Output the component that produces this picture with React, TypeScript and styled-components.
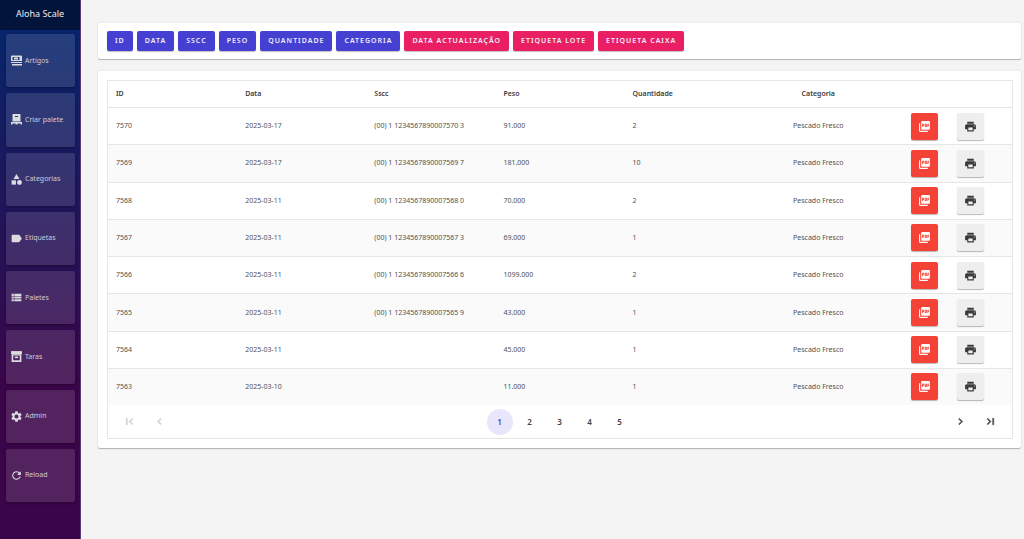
import React from "react";
import styled, { createGlobalStyle } from "styled-components";
import {
  MdCategory,
  MdChevronLeft,
  MdChevronRight,
  MdFirstPage,
  MdLabel,
  MdLastPage,
  MdPictureAsPdf,
  MdPrint,
  MdRefresh,
  MdSettings,
  MdViewList,
} from "react-icons/md";

const GlobalStyle = createGlobalStyle`
  * { box-sizing: border-box; }
  body {
    margin: 0;
    background: #f4f4f4;
    font-family: "Noto Sans", "Open Sans", sans-serif;
    color: #3c3c3c;
  }
  button { font-family: inherit; cursor: pointer; }
`;

const Layout = styled.div`
  display: flex;
  min-height: 100vh;
`;

const Sidebar = styled.aside`
  flex: 0 0 81px;
  background: linear-gradient(180deg, #08246a 0%, #08246a 8%, #3b0549 72%, #3b0549 100%);
  border-right: 1px solid #5a3a7c;
`;

const Brand = styled.div`
  height: 30px;
  display: flex;
  align-items: center;
  justify-content: center;
  background: #03143a;
  color: #ececf2;
  font-size: 9px;
  line-height: 12px;
  padding-bottom: 2px;
`;

const NavList = styled.nav`
  display: grid;
  grid-auto-rows: 1fr;
  gap: 6px;
  min-height: 468px;
  margin: 4px 5px 0 6px;
`;

const NavLink = styled.a`
  display: flex;
  align-items: center;
  gap: 2px;
  padding-left: 4px;
  border-radius: 2px;
  background: rgba(255, 255, 255, 0.12);
  box-shadow: 0 1px 3px rgba(0, 0, 0, 0.35);
  color: #cfcbdb;
  font-size: 7px;
  line-height: 10px;
  text-decoration: none;
  white-space: nowrap;

  svg {
    flex: none;
    width: 13px;
    height: 13px;
    color: #dcdce0;
  }
`;

const Main = styled.main`
  flex: 1;
  min-width: 0;
  display: flex;
  flex-direction: column;
  gap: 12px;
  padding: 23px 3px 23px 17px;
`;

const Card = styled.section`
  padding: 9px 8px 9px 9px;
  background: #fff;
  border-radius: 2px;
  box-shadow: 0 1px 1px rgba(0, 0, 0, 0.26), 0 0 2px rgba(0, 0, 0, 0.1);
`;

const Toolbar = styled(Card)`
  display: flex;
  flex-wrap: wrap;
  gap: 4px;
  padding-top: 8px;
  padding-bottom: 8px;
`;

const ColumnButton = styled.button<{ $off?: boolean }>`
  height: 20px;
  padding: 0 8px;
  border: 0;
  border-radius: 2px;
  background: ${(p) => (p.$off ? "#e91e63" : "#4540d2")};
  box-shadow: 0 1px 1px rgba(0, 0, 0, 0.25);
  color: #f0eefb;
  font-size: 7px;
  font-weight: 600;
  line-height: 20px;
  letter-spacing: 1px;
  text-transform: uppercase;
`;

const Frame = styled.div`
  border: 1px solid #e6e6e6;
`;

const Table = styled.table`
  width: 100%;
  height: 324px;
  table-layout: fixed;
  border-collapse: separate;
  border-spacing: 0;
  font-size: 7px;
  line-height: 10px;
`;

const HeadCell = styled.th<{ $center?: boolean }>`
  height: 27px;
  padding: 0 8px;
  border-bottom: 1px solid #e6e6e6;
  font-weight: 600;
  text-align: ${(p) => (p.$center ? "center" : "left")};
`;

const Row = styled.tr`
  &:nth-child(even) { background: #fafafa; }
  &:not(:last-child) td { border-bottom: 1px solid #e6e6e6; }
`;

const Cell = styled.td<{ $center?: boolean }>`
  padding: 0 8px;
  color: #505050;
  text-align: ${(p) => (p.$center ? "center" : "left")};
`;

const Actions = styled.div`
  display: flex;
  justify-content: center;
  gap: 19px;
`;

const ActionButton = styled.button<{ $danger?: boolean }>`
  width: 27px;
  height: 27px;
  display: flex;
  align-items: center;
  justify-content: center;
  padding: 0;
  border: 0;
  border-radius: 2px;
  background: ${(p) => (p.$danger ? "#f44336" : "#eeeeee")};
  color: ${(p) => (p.$danger ? "#fff" : "#3a3a3a")};
  box-shadow: 0 1px 1px rgba(0, 0, 0, 0.28);

  svg { width: 13px; height: 13px; }
`;

const Pager = styled.nav`
  display: flex;
  align-items: center;
  justify-content: space-between;
  height: 33px;
  padding: 0 9px 0 8px;
`;

const PagerGroup = styled.div`
  display: flex;
  gap: 4px;
`;

const PageButton = styled.button<{ $active?: boolean }>`
  width: 26px;
  height: 26px;
  display: flex;
  align-items: center;
  justify-content: center;
  padding: 0;
  border: 0;
  border-radius: 50%;
  background: ${(p) => (p.$active ? "#e8e6fa" : "transparent")};
  color: ${(p) => (p.$active ? "#4540d2" : "#444")};
  font-size: 8px;
  font-weight: 600;
  line-height: 12px;

  &:disabled { color: #d0d0d0; }
  svg {
    width: 13px;
    height: 13px;
  }
  svg path:not([fill="none"]) {
    stroke: currentColor;
    stroke-width: 1px;
  }
`;

const ArticleIcon = () => (
  <svg viewBox="-2 -2 26 26" fill="currentColor" aria-hidden="true">
    <path fillRule="evenodd" d="M2 1h18a2 2 0 0 1 2 2v9H0V3a2 2 0 0 1 2-2zm1 3v6h14V4z" />
    <path d="M6 5h8v4H6zM0 14h22v2H0zM2 18h20v3H2z" />
  </svg>
);

const PalletIcon = () => (
  <svg viewBox="-2 -2 26 26" fill="currentColor" aria-hidden="true">
    <path fillRule="evenodd" d="M4 0h14a1 1 0 0 1 1 1v14H3V1a1 1 0 0 1 1-1zm4 4v2h6V4z" />
    <path d="M0 16h22v5h-3v-2h-6v2H9v-2H3v2H0z" />
  </svg>
);

const CrateIcon = () => (
  <svg viewBox="0 0 24 24" fill="currentColor" aria-hidden="true">
    <path d="M2 2h20v6H2z" />
    <path fillRule="evenodd" d="M3 8h18v14H3zm3 2v9h12v-9z" />
    <path d="M9 12h6v3H9z" />
  </svg>
);

const navItems = [
  { label: "Artigos", Icon: ArticleIcon },
  { label: "Criar palete", Icon: PalletIcon },
  { label: "Categorias", Icon: MdCategory },
  { label: "Etiquetas", Icon: MdLabel },
  { label: "Paletes", Icon: MdViewList },
  { label: "Taras", Icon: CrateIcon },
  { label: "Admin", Icon: MdSettings },
  { label: "Reload", Icon: MdRefresh },
];

const columnButtons = [
  { label: "ID" },
  { label: "Data" },
  { label: "Sscc" },
  { label: "Peso" },
  { label: "Quantidade" },
  { label: "Categoria" },
  { label: "Data Actualização", off: true },
  { label: "Etiqueta Lote", off: true },
  { label: "Etiqueta Caixa", off: true },
];

const rows = [
  ["7570", "2025-03-17", "(00) 1 1234567890007570 3", "91.000", "2"],
  ["7569", "2025-03-17", "(00) 1 1234567890007569 7", "181.000", "10"],
  ["7568", "2025-03-11", "(00) 1 1234567890007568 0", "70.000", "2"],
  ["7567", "2025-03-11", "(00) 1 1234567890007567 3", "69.000", "1"],
  ["7566", "2025-03-11", "(00) 1 1234567890007566 6", "1099.000", "2"],
  ["7565", "2025-03-11", "(00) 1 1234567890007565 9", "43.000", "1"],
  ["7564", "2025-03-11", "", "45.000", "1"],
  ["7563", "2025-03-10", "", "11.000", "1"],
];

export default function App() {
  return (
    <Layout>
      <GlobalStyle />
      <Sidebar>
        <Brand>Aloha Scale</Brand>
        <NavList>
          {navItems.map(({ label, Icon }) => (
            <NavLink href="#" key={label}>
              <Icon />
              {label}
            </NavLink>
          ))}
        </NavList>
      </Sidebar>
      <Main>
        <Toolbar>
          {columnButtons.map((b) => (
            <ColumnButton type="button" key={b.label} $off={b.off}>
              {b.label}
            </ColumnButton>
          ))}
        </Toolbar>
        <Card>
          <Frame>
            <Table>
              <thead>
                <tr>
                  <HeadCell>ID</HeadCell>
                  <HeadCell>Data</HeadCell>
                  <HeadCell>Sscc</HeadCell>
                  <HeadCell>Peso</HeadCell>
                  <HeadCell>Quantidade</HeadCell>
                  <HeadCell $center>Categoria</HeadCell>
                  <HeadCell aria-label="Ações" />
                </tr>
              </thead>
              <tbody>
                {rows.map((row) => (
                  <Row key={row[0]}>
                    {row.map((value, i) => (
                      <Cell key={i}>{value}</Cell>
                    ))}
                    <Cell $center>Pescado Fresco</Cell>
                    <Cell>
                      <Actions>
                        <ActionButton type="button" $danger aria-label="PDF">
                          <MdPictureAsPdf />
                        </ActionButton>
                        <ActionButton type="button" aria-label="Imprimir">
                          <MdPrint />
                        </ActionButton>
                      </Actions>
                    </Cell>
                  </Row>
                ))}
              </tbody>
            </Table>
            <Pager aria-label="Paginação">
              <PagerGroup>
                <PageButton type="button" disabled aria-label="Primeira"><MdFirstPage /></PageButton>
                <PageButton type="button" disabled aria-label="Anterior"><MdChevronLeft /></PageButton>
              </PagerGroup>
              <PagerGroup>
                {[1, 2, 3, 4, 5].map((n) => (
                  <PageButton type="button" key={n} $active={n === 1}>{n}</PageButton>
                ))}
              </PagerGroup>
              <PagerGroup>
                <PageButton type="button" aria-label="Seguinte"><MdChevronRight /></PageButton>
                <PageButton type="button" aria-label="Última"><MdLastPage /></PageButton>
              </PagerGroup>
            </Pager>
          </Frame>
        </Card>
      </Main>
    </Layout>
  );
}
